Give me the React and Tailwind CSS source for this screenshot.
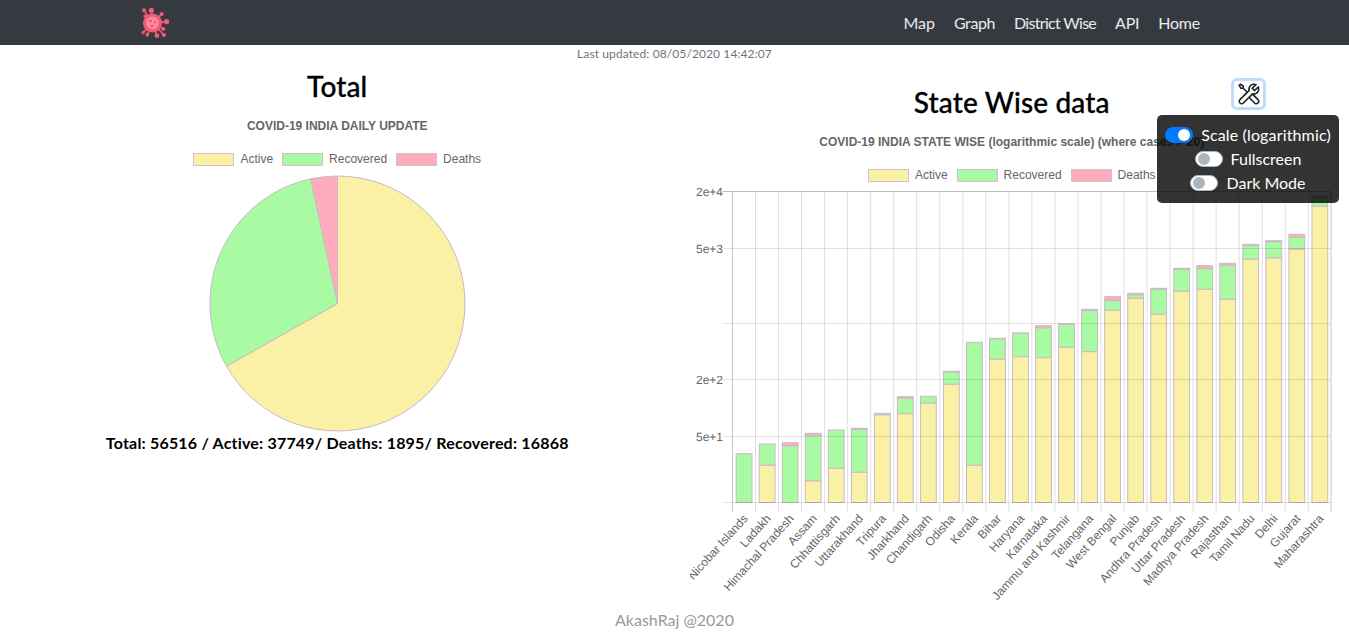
import { LiaToolsSolid } from 'react-icons/lia'

const COLORS = { active: '#faf0a6', recovered: '#a8fba3', deaths: '#ffadbd', border: '#cbb9c6' }

// pixel tops read off the chart: [name, active top, recovered top, deaths top]
const STATES = [
  ['Andaman and Nicobar Islands', 502.5, 453.7, 453.7],
  ['Ladakh', 465.3, 444, 444],
  ['Himachal Pradesh', 502.5, 446, 442.7],
  ['Assam', 481, 435.3, 433.3],
  ['Chhattisgarh', 468.3, 430, 430],
  ['Uttarakhand', 472.3, 429.3, 428.3],
  ['Tripura', 415, 413.3, 413.3],
  ['Jharkhand', 413.7, 398.3, 396.7],
  ['Chandigarh', 403.3, 396.3, 396.3],
  ['Odisha', 384.3, 372, 371.3],
  ['Kerala', 465.3, 342.3, 342.3],
  ['Bihar', 359.3, 338.7, 338.3],
  ['Haryana', 356.7, 333.3, 333],
  ['Karnataka', 357.7, 328, 325.7],
  ['Jammu and Kashmir', 347.3, 324.3, 324],
  ['Telangana', 351.7, 310.7, 309.3],
  ['West Bengal', 310.3, 300.7, 296.7],
  ['Punjab', 298.3, 295, 293.3],
  ['Andhra Pradesh', 314.3, 289.3, 288.3],
  ['Uttar Pradesh', 291.3, 269.3, 268.3],
  ['Madhya Pradesh', 289.3, 268.7, 265.7],
  ['Rajasthan', 299.3, 265.3, 263.3],
  ['Tamil Nadu', 259.3, 245.7, 244.3],
  ['Delhi', 258, 241.7, 240.7],
  ['Gujarat', 249.3, 237.3, 234.3],
  ['Maharashtra', 206.3, 197.3, 195.7],
]

const Y_LINES = [
  [191.5, '2e+4'],
  [248.5, '5e+3'],
  [323.5, ''],
  [379.5, '2e+2'],
  [436.5, '5e+1'],
  [502.5, ''],
]

// svg origin on the page
const OX = 690
const OY = 184
const LEFT = 732.5 - OX
const BOTTOM = 502.5 - OY
const CAT = 23.03

function Legend() {
  const items = [['Active', 'bg-[#faf0a6]'], ['Recovered', 'bg-[#a8fba3]'], ['Deaths', 'bg-[#ffadbd]']]
  return (
    <div className="flex justify-center gap-[9px] font-['Liberation_Sans',sans-serif] text-xs leading-[14px] text-[#666]">
      {items.map(([label, bg]) => (
        <div key={label} className="flex items-center gap-[6px]">
          <span className={`h-[13px] w-[41px] border border-[#d3c0ca] ${bg}`} />
          <span>{label}</span>
        </div>
      ))}
    </div>
  )
}

function PieChart() {
  const c = 128.5
  const r = 127.5
  const pt = (deg) => {
    const a = (deg * Math.PI) / 180
    return `${(c + r * Math.sin(a)).toFixed(2)} ${(c - r * Math.cos(a)).toFixed(2)}`
  }
  const slice = (from, to) => `M${c} ${c}L${pt(from)}A${r} ${r} 0 ${to - from > 180 ? 1 : 0} 1 ${pt(to)}Z`
  return (
    <svg width="257" height="257" className="block">
      <path d={slice(0, 240.5)} fill={COLORS.active} stroke={COLORS.border} />
      <path d={slice(240.5, 347.9)} fill={COLORS.recovered} stroke={COLORS.border} />
      <path d={slice(347.9, 360)} fill={COLORS.deaths} stroke={COLORS.border} />
    </svg>
  )
}

function BarChart() {
  return (
    <svg width="644" height="430" className="mx-auto block overflow-hidden font-['Liberation_Sans',sans-serif]">
      {STATES.map(([name], i) => {
        const x = LEFT + i * CAT
        return <line key={name} x1={x} x2={x} y1={191.5 - OY} y2={BOTTOM + 9} stroke="#e0e0e0" />
      })}
      <line x1={LEFT} x2={LEFT} y1={191.5 - OY} y2={BOTTOM + 9} stroke="#c4c4c4" />
      <line x1={641} x2={641} y1={191.5 - OY} y2={BOTTOM + 9} stroke="#c4c4c4" />

      {STATES.map(([name, a, r, d], i) => {
        const x = LEFT + i * CAT + 3.7
        const w = 15.8
        return (
          <g key={name} stroke={COLORS.border} strokeWidth="1">
            {d < r && <rect x={x} y={d - OY} width={w} height={r - d} fill={COLORS.deaths} />}
            {r < a && <rect x={x} y={r - OY} width={w} height={a - r} fill={COLORS.recovered} />}
            {a < 502 && <rect x={x} y={a - OY} width={w} height={502.5 - a} fill={COLORS.active} />}
          </g>
        )
      })}

      {Y_LINES.map(([y, label], i) => (
        <g key={y}>
          <line x1={723 - OX} x2={641} y1={y - OY} y2={y - OY} stroke={i === 0 ? '#bdbdbd' : '#000'} strokeOpacity={i === 0 ? 1 : 0.11} />
          {label && (
            <text x={723 - OX} y={y - OY + 4} textAnchor="end" fontSize="12" fill="#666" textRendering="geometricPrecision">
              {label}
            </text>
          )}
        </g>
      ))}

      {STATES.map(([name], i) => {
        const x = LEFT + i * CAT + CAT / 2 + 4.5
        const y = BOTTOM + 16.5
        return (
          <text key={name} x={x} y={y} transform={`rotate(-48 ${x} ${y})`} textAnchor="end" fontSize="12" fill="#666" textRendering="geometricPrecision">
            {name}
          </text>
        )
      })}
    </svg>
  )
}

function Virus() {
  const blobs = [
    [7, 3.3, 2], [14.3, 3.3, 2.6], [24.7, 7, 2], [29.7, 14.7, 2.6], [26.3, 22, 2],
    [27, 28, 2], [20, 28.7, 2.4], [10.3, 27.7, 2], [6, 25.7, 1.6], [8, 9, 1.6],
  ]
  return (
    <svg width="32" height="32" viewBox="0 0 32 32" className="block">
      {blobs.map(([x, y, r]) => (
        <g key={`${x}-${y}`}>
          <line x1="15.5" y1="16" x2={x} y2={y} stroke="#f25a74" strokeWidth="1.8" />
          <circle cx={x} cy={y} r={r} fill="#f25a74" />
        </g>
      ))}
      <circle cx="15.5" cy="16" r="9.6" fill="#f25a74" />
      <circle cx="15.5" cy="16" r="6.4" fill="#f98a9c" />
      <circle cx="13.5" cy="14" r="1.3" fill="#ec4f6c" />
      <circle cx="18" cy="15" r="1" fill="#ec4f6c" />
      <circle cx="15" cy="19" r="1.2" fill="#ec4f6c" />
    </svg>
  )
}

function Toggle({ label, on }) {
  return (
    <div className="flex h-6 items-center justify-center gap-2">
      <span className={`flex h-4 w-7 items-center rounded-full border px-[2px] ${on ? 'justify-end border-[#007bff] bg-[#007bff]' : 'border-[#adb5bd] bg-white'}`}>
        <span className={`h-3 w-3 rounded-full ${on ? 'bg-white' : 'bg-[#adb5bd]'}`} />
      </span>
      <span className={on ? 'tracking-[0.15px]' : ''}>{label}</span>
    </div>
  )
}

export default function App() {
  return (
    <div className="relative h-[633px] overflow-hidden bg-white font-['Lato',sans-serif] text-black">
      <nav className="flex h-[45px] items-center justify-between bg-[#343a40] pl-[137px] pr-[149px]">
        <Virus />
        <div className="flex gap-[19px] text-base text-white/90">
          <a>Map</a>
          <a className="tracking-[-0.4px]">Graph</a>
          <a className="tracking-[-0.7px]">District Wise</a>
          <a className="tracking-[-0.3px]">API</a>
          <a className="tracking-[-0.2px]">Home</a>
        </div>
      </nav>

      <p className="h-4 pt-px text-center text-xs leading-4 tracking-[0.1px] text-[#6c757d]">Last updated: 08/05/2020 14:42:07</p>

      <div className="grid grid-cols-2">
        <section className="flex flex-col items-center pt-[6px]">
          <h2 className="h-[38px] text-[28px] font-medium leading-[38px] tracking-[0.15px] [-webkit-text-stroke:0.3px_black]">Total</h2>
          <h3 className="mt-[14px] h-[14px] font-['Liberation_Sans',sans-serif] text-xs font-bold leading-[14px] text-[#666]">
            COVID-19 INDIA DAILY UPDATE
          </h3>
          <div className="mt-[19px]">
            <Legend />
          </div>
          <div className="mt-[9px]">
            <PieChart />
          </div>
          <p className="-mt-px text-base font-bold tracking-[0.19px]">Total: 56516 / Active: 37749/ Deaths: 1895/ Recovered: 16868</p>
        </section>

        <section className="relative pt-[22px]">
          <h2 className="h-[38px] text-center text-[28px] font-medium leading-[38px] tracking-[0.15px] [-webkit-text-stroke:0.3px_black]">State Wise data</h2>
          <h3 className="mt-[14px] h-[14px] text-center font-['Liberation_Sans',sans-serif] text-xs font-bold leading-[14px] text-[#666]">
            COVID-19 INDIA STATE WISE (logarithmic scale) (where cases &gt; 20)
          </h3>
          <div className="mt-[19px]">
            <Legend />
          </div>
          <div className="mt-[2px]">
            <BarChart />
          </div>
        </section>
      </div>

      <p className="absolute inset-x-0 bottom-[1px] text-center text-base text-[#999]">AkashRaj @2020</p>

      <button className="absolute left-[1231px] top-[78px] flex h-[32px] w-[35px] items-center justify-center rounded-[6px] border-[3px] border-[#bfdcff] bg-white text-[#212529]">
        <LiaToolsSolid className="h-[26px] w-[26px]" />
      </button>

      <div className="absolute left-[1157px] top-[115px] h-[88px] w-[182px] rounded-[5px] bg-black/80 pt-2 text-center text-base leading-6 text-white">
        <Toggle label="Scale (logarithmic)" on />
        <Toggle label="Fullscreen" />
        <Toggle label="Dark Mode" />
      </div>
    </div>
  )
}
